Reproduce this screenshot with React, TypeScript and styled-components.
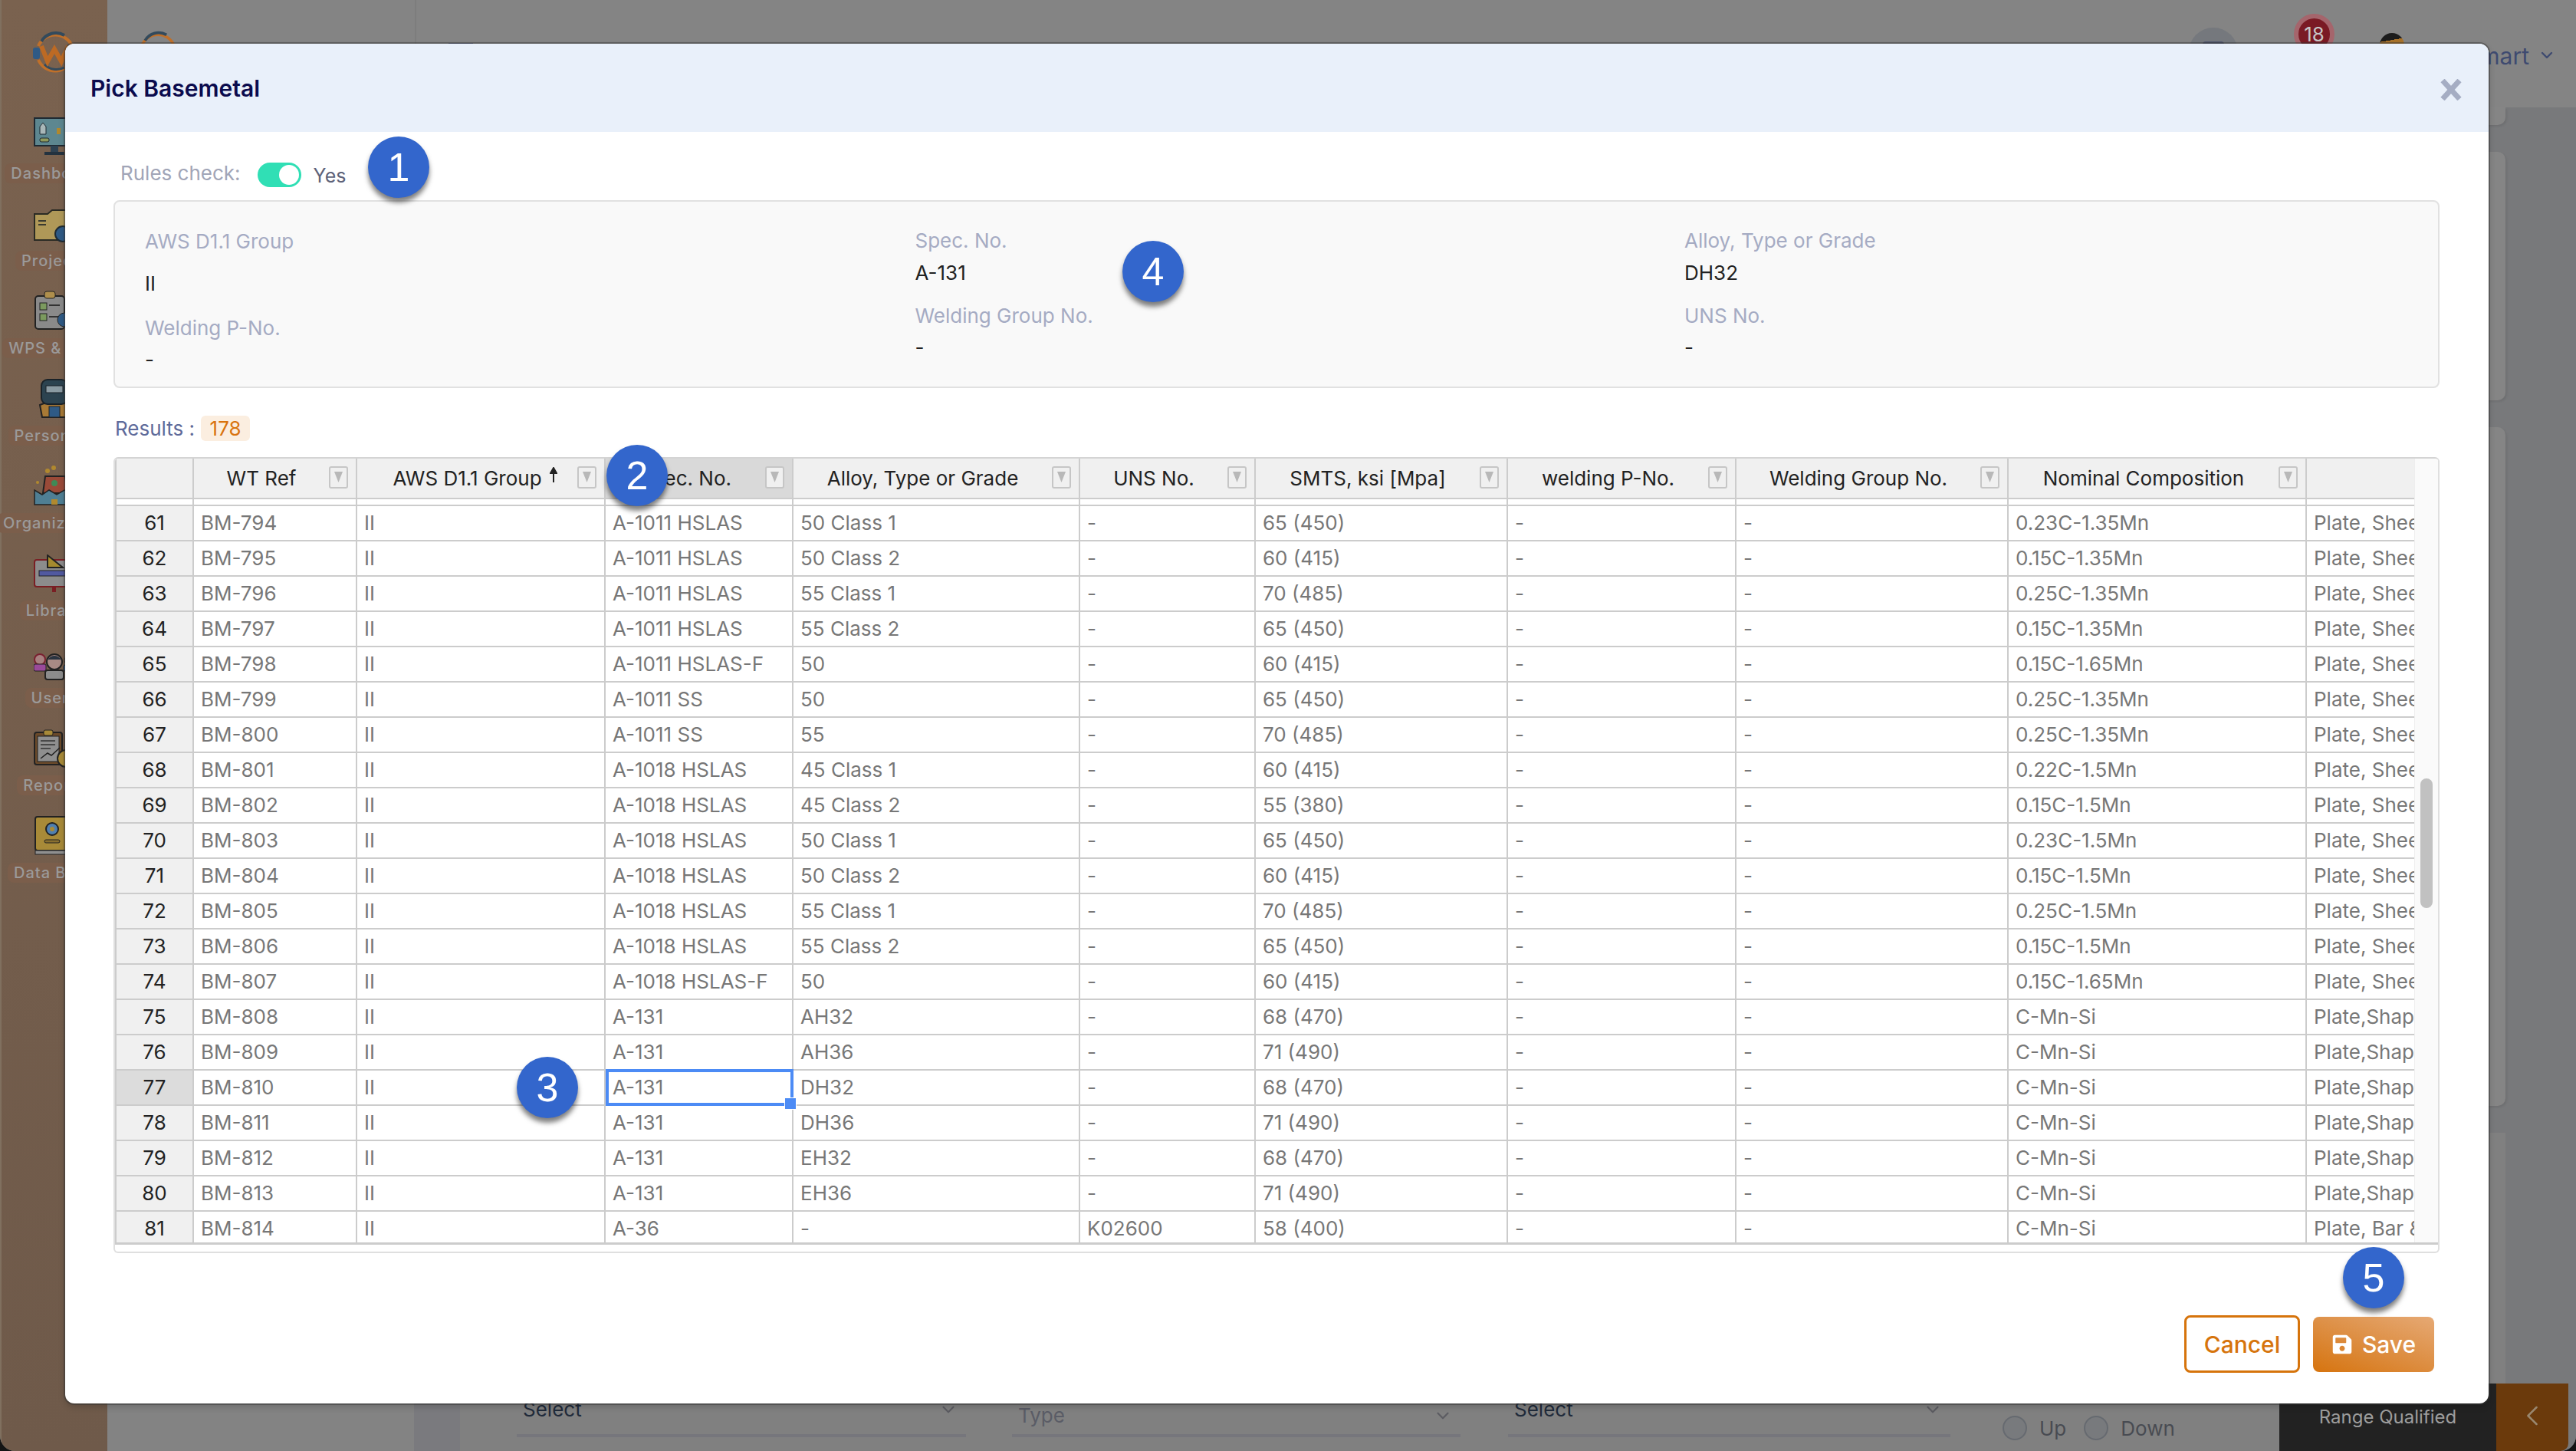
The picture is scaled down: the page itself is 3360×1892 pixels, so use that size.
import React from "react";
import styled, { createGlobalStyle } from "styled-components";
import { FaSave } from "react-icons/fa";
import { ChevronDown, ChevronLeft } from "lucide-react";

const Global = createGlobalStyle`
  html, body { margin: 0; padding: 0; background: #141414; }
  body { width: 3360px; height: 1892px; overflow: hidden; font-family: Inter, "Liberation Sans", sans-serif; }
  * { box-sizing: border-box; }
`;

const Page = styled.div`
  position: relative; width: 3360px; height: 1892px; display: flex; overflow: hidden;
  border-radius: 0 0 20px 20px; background: #78797b;
`;

/* ---------- sidebar ---------- */
const Sidebar = styled.aside`
  width: 140px; flex: none; display: flex; flex-direction: column; align-items: center;
  background: linear-gradient(180deg, #7a624f 0%, #6f5a4a 100%); border-left: 2px solid #80705f;
`;
const SideLogo = styled.div` height: 125px; width: 100%; padding: 38px 0 0 40px; `;
const SideItem = styled.div`
  height: 114px; width: 100%; display: flex; flex-direction: column; align-items: center;
  justify-content: flex-end; gap: 10px; flex: none;
`;
const SideLabel = styled.span`
  display: inline-block; white-space: nowrap; height: 26px; line-height: 26px; padding: 0 8px;
  border-radius: 8px; background: #7b5e4b; color: #9b9a9a; font-size: 20px; font-weight: 500; letter-spacing: 1px;
`;

const LogoMark = ({ size }: { size: number }) => (
  <svg width={size} height={size} viewBox="0 0 60 60">
    <path d="M8 22 A24 24 0 0 1 52 22" fill="none" stroke="#c0702a" strokeWidth="4" />
    <path d="M12 16 A22 22 0 0 1 42 8" fill="none" stroke="#334a5c" strokeWidth="4" />
    <path d="M8 40 A24 24 0 0 0 52 40" fill="none" stroke="#c0702a" strokeWidth="4" />
    <path d="M16 46 A22 22 0 0 0 42 50" fill="none" stroke="#334a5c" strokeWidth="3" />
    <path d="M12 22 L20 42 L29 26 L38 42 L47 22" fill="none" stroke="#bd6a24" strokeWidth="6" />
    <rect x="1" y="24" width="9" height="15" rx="3" fill="#2f5a85" />
  </svg>
);

const IconMonitor = () => (
  <svg width="54" height="50" viewBox="0 0 54 50">
    <rect x="1" y="1" width="52" height="36" fill="#5d8790" stroke="#1e2a33" strokeWidth="2" />
    <path d="M8 22 V12 L12 7 L16 12 V22 Z" fill="#a9b7b8" stroke="#1e2a33" />
    <rect x="30" y="14" width="5" height="8" fill="#b1892e" />
    <rect x="8" y="27" width="12" height="5" rx="2" fill="#8f9a5c" stroke="#1e2a33" />
    <rect x="22" y="37" width="10" height="8" fill="#2e4252" />
    <rect x="14" y="45" width="26" height="4" fill="#23323f" />
  </svg>
);
const IconFolder = () => (
  <svg width="54" height="44" viewBox="0 0 54 44">
    <path d="M1 6 H18 L24 1 H50 V40 H1 Z" fill="#af9858" stroke="#2b2b24" strokeWidth="2" />
    <rect x="6" y="14" width="10" height="2" fill="#3a3a30" /><rect x="6" y="19" width="10" height="2" fill="#3a3a30" />
    <circle cx="38" cy="32" r="10" fill="#2f5a85" stroke="#1e2a33" strokeWidth="2" />
  </svg>
);
const IconClip = () => (
  <svg width="54" height="52" viewBox="0 0 54 52">
    <rect x="2" y="7" width="38" height="43" rx="4" fill="#8a8a8a" stroke="#222" strokeWidth="2" />
    <rect x="14" y="1" width="14" height="9" rx="3" fill="#af8f4c" stroke="#222" />
    <rect x="8" y="16" width="9" height="9" fill="#7b9a5e" stroke="#222" /><rect x="8" y="30" width="9" height="9" fill="#7b9a5e" stroke="#222" />
    <rect x="20" y="18" width="14" height="2" fill="#333" /><rect x="20" y="33" width="14" height="2" fill="#333" />
    <circle cx="40" cy="38" r="9" fill="#2f5a85" stroke="#222" />
  </svg>
);
const IconWelder = () => (
  <svg width="54" height="51" viewBox="0 0 54 51">
    <path d="M8 34 L11 50 H43 L46 34 Q27 26 8 34 Z" fill="#a87a36" stroke="#222" strokeWidth="2" />
    <rect x="20" y="36" width="14" height="14" fill="#2f5a85" stroke="#222" />
    <rect x="10" y="1" width="34" height="32" rx="8" fill="#2c4350" stroke="#1a2228" strokeWidth="2" />
    <rect x="16" y="9" width="22" height="9" fill="#8a9aa2" stroke="#1a2228" />
  </svg>
);
const IconFactory = () => (
  <svg width="54" height="52" viewBox="0 0 54 52">
    <circle cx="26" cy="3" r="3" fill="#b1892e" /><circle cx="18" cy="7" r="3" fill="#b1892e" /><circle cx="5" cy="22" r="2" fill="#b1892e" />
    <path d="M15 14 H41 L44 36 H12 Z" fill="#9a4a38" stroke="#222" strokeWidth="2" />
    <circle cx="27" cy="23" r="4" fill="#3f8a56" />
    <path d="M1 51 V32 L11 38 L20 32 L30 38 L40 32 L53 38 V51 Z" fill="#4f7f94" stroke="#222" strokeWidth="1.5" />
    <rect x="23" y="44" width="8" height="7" fill="#b1892e" />
  </svg>
);
const IconBook = () => (
  <svg width="54" height="50" viewBox="0 0 54 50">
    <rect x="1" y="7" width="52" height="35" rx="3" fill="#8c8c8c" stroke="#7a1f24" strokeWidth="2" />
    <path d="M18 1 L38 17 H18 Z" fill="#a58a2e" stroke="#222" strokeWidth="2" />
    <rect x="7" y="21" width="42" height="7" fill="#5159a0" stroke="#222" />
    <rect x="24" y="42" width="5" height="7" fill="#7a1f24" />
  </svg>
);
const IconUsers = () => (
  <svg width="54" height="37" viewBox="0 0 54 37">
    <circle cx="8" cy="10" r="7" fill="#a88080" stroke="#7a2030" strokeWidth="2" />
    <rect x="0" y="16" width="16" height="9" rx="2" fill="#9a4a9a" stroke="#222" />
    <circle cx="27" cy="13" r="10" fill="#a88a84" stroke="#222" strokeWidth="2" />
    <path d="M18 10 Q27 0 36 10 Z" fill="#2a3440" />
    <rect x="15" y="24" width="24" height="12" rx="3" fill="#8c8c8c" stroke="#222" strokeWidth="2" />
    <circle cx="46" cy="11" r="6" fill="#a88a84" stroke="#222" />
    <rect x="39" y="17" width="14" height="8" rx="2" fill="#3a6aa0" stroke="#222" />
  </svg>
);
const IconReport = () => (
  <svg width="54" height="50" viewBox="0 0 54 50">
    <rect x="1" y="4" width="36" height="42" rx="3" fill="#6b4a2a" stroke="#222" strokeWidth="2" />
    <rect x="5" y="9" width="28" height="33" fill="#8f8f8f" stroke="#222" />
    <rect x="13" y="1" width="12" height="7" rx="2" fill="#a88a38" stroke="#222" />
    <path d="M9 15 H28 M9 20 H28 M9 25 H22" stroke="#333" strokeWidth="1.5" />
    <path d="M9 38 L18 31 L23 34 L34 24" stroke="#222" strokeWidth="1.5" fill="none" />
    <circle cx="42" cy="38" r="11" fill="#a88a38" stroke="#222" strokeWidth="2" />
  </svg>
);
const IconData = () => (
  <svg width="54" height="51" viewBox="0 0 54 51">
    <rect x="2" y="1" width="44" height="44" rx="3" fill="#a88a38" stroke="#222" strokeWidth="2" />
    <circle cx="24" cy="17" r="8" fill="#4f7fb0" stroke="#222" strokeWidth="2" />
    <circle cx="24" cy="17" r="3" fill="#a88a38" />
    <rect x="14" y="31" width="20" height="4" rx="2" fill="#8a7030" stroke="#222" />
    <rect x="2" y="45" width="46" height="5" fill="#8f8f8f" stroke="#222" />
  </svg>
);

const sideItems: { label: string; icon: React.ReactNode }[] = [
  { label: "Dashboard", icon: <IconMonitor /> },
  { label: "Projects", icon: <IconFolder /> },
  { label: "WPS & PQR", icon: <IconClip /> },
  { label: "Personnel", icon: <IconWelder /> },
  { label: "Organization", icon: <IconFactory /> },
  { label: "Library", icon: <IconBook /> },
  { label: "Users", icon: <IconUsers /> },
  { label: "Reports", icon: <IconReport /> },
  { label: "Data Bank", icon: <IconData /> },
];

/* ---------- page behind the dialog ---------- */
const Main = styled.div` flex: 1; min-width: 0; display: flex; flex-direction: column; `;
const TopBar = styled.header`
  height: 140px; flex: none; display: flex; align-items: flex-start; background: #848484; padding-left: 38px;
`;
const TopLogo = styled.div` margin-top: 38px; flex: none; `;
const TopBrand = styled.div`
  margin: 48px 0 0 -17px; width: 324px; flex: none; color: #33363c; font-size: 40px; font-weight: 700; letter-spacing: 1px;
`;
const TopDivider = styled.div` width: 2px; height: 140px; background: #7d7d7d; margin-left: 0; flex: none; `;
const Burger = styled.div` margin: 56px 0 0 42px; width: 32px; height: 6px; background: #4e5470; flex: none; `;
const TopRight = styled.div` margin-left: auto; display: flex; align-items: flex-start; padding-right: 26px; `;
const RoundBtn = styled.div`
  margin-top: 36px; width: 64px; height: 64px; border-radius: 50%; background: #75787d; display: flex; justify-content: center; padding-top: 18px;
`;
const RoundGlyph = styled.span` width: 28px; height: 20px; border-radius: 4px; background: #50566e; `;
const Badge = styled.div`
  margin: 18px 0 0 73px; width: 53px; height: 53px; border-radius: 50%; background: #7a1a24; border: 6px solid #a5656c;
  color: #c6c6c6; font-size: 26px; display: flex; align-items: center; justify-content: center;
`;
const Avatar = styled.div`
  margin: 43px 0 0 59px; width: 32px; height: 44px; border-radius: 16px 16px 4px 4px;
  background: linear-gradient(170deg, #1c1c1c 0 24%, #a8722a 24%);
`;
const UserName = styled.span` margin: 51px 0 0 12px; width: 151px; text-align: right; color: #3e4a70; font-size: 30px; line-height: 44px; white-space: nowrap; `;
const UserChevron = styled(ChevronDown)` margin: 60px 0 0 11px; color: #3e4a70; `;

const Below = styled.div` flex: 1; display: flex; min-height: 0; `;
const LeftRail = styled.div` width: 400px; flex: none; background: #838383; `;
const Strip = styled.div` width: 60px; flex: none; background: #7a7a7e; `;
const Content = styled.div`
  flex: 1; display: flex; flex-direction: column; gap: 35px; padding-right: 92px; min-width: 0; background: #78797b;
`;
const SoftCard = styled.div<{ $h?: number }>`
  background: #858585; border-radius: 0 0 10px 0; flex: ${p => (p.$h ? `0 0 ${p.$h}px` : "1")};
  ${p => (p.$h === 324 || p.$h === 885 ? "border-radius: 10px;" : "")}
  box-shadow: 2px 2px 3px rgba(0, 0, 0, .08);
`;
const FormCard = styled.div`
  flex: 1; display: flex; align-items: flex-end; padding: 0 0 18px 74px; background: #808080;
`;
const Field = styled.div<{ $w: number; $gap: number; $offset: number }>`
  width: ${p => p.$w}px; margin-right: ${p => p.$gap}px; flex: none; height: 51px; position: relative; display: flex;
  justify-content: space-between; border-bottom: 4px solid #76767c; padding: ${p => p.$offset}px 10px 0 8px;
  font-size: 26px; line-height: 30px;
`;
const FieldText = styled.span<{ $muted?: boolean }>` color: ${p => (p.$muted ? "#5a5c66" : "#1f2a3a")}; `;
const FieldChevron = styled(ChevronDown)` color: #5c5c62; margin-top: 2px; `;
const RadioGroup = styled.div` display: flex; align-items: center; gap: 16px; margin: 0 0 -4px 68px; color: #484b52; font-size: 26px; `;
const Radio = styled.span` width: 32px; height: 32px; border-radius: 50%; border: 2px solid #666a70; background: #787a7d; `;
const RadioLabel = styled.span` margin-right: 7px; `;
const RangeBar = styled.div`
  position: absolute; left: 2973px; top: 1804px; height: 88px; display: flex; border-radius: 0;
`;
const RangeText = styled.div`
  width: 283px; background: #222; color: #9d9d9d; font-size: 24px; text-align: center; padding-top: 29px;
`;
const RangeToggle = styled.div`
  width: 94px; background: #6b3a0c; color: #99876f; display: flex; align-items: flex-start; justify-content: center; padding-top: 20px;
  border-radius: 0 0 10px 0;
`;

/* ---------- dialog ---------- */
const Modal = styled.section`
  position: absolute; left: 85px; top: 57px; width: 3161px; height: 1773px; background: #fff; border-radius: 12px;
  display: flex; flex-direction: column; box-shadow: 0 0 0 2px rgba(50, 50, 50, .45), 0 4px 10px rgba(0, 0, 0, .2);
`;
const ModalHead = styled.header`
  height: 115px; flex: none; background: #e9f0fa; border-radius: 12px 12px 0 0; display: flex; align-items: center;
  justify-content: space-between; padding: 0 35px 0 33px;
`;
const ModalTitle = styled.h2` margin: 0; color: #0b0b4d; font-size: 30px; font-weight: 600; `;
const CloseBtn = styled.button` border: 0; padding: 0; background: none; width: 28px; height: 28px; display: flex; margin-top: 5px; `;
const ModalBody = styled.div` flex: 1; display: flex; flex-direction: column; padding: 40px 64px 0 63px; min-height: 0; `;

const RulesRow = styled.div` height: 32px; display: flex; align-items: center; padding-left: 9px; flex: none; `;
const RulesLabel = styled.span` color: #a1a5b7; font-size: 26px; margin: -6px 22px 0 0; `;
const Toggle = styled.span`
  width: 57px; height: 32px; border-radius: 16px; background: #30dfb5; display: flex; justify-content: flex-end; align-items: center; padding-right: 3px; margin-right: 16px;
`;
const Knob = styled.span` width: 26px; height: 26px; border-radius: 50%; background: #fff; `;
const YesText = styled.span` color: #5e6278; font-size: 25px; margin-top: 1px; `;

const InfoPanel = styled.div`
  margin-top: 17px; height: 245px; flex: none; background: #f9f9f9; border: 2px solid #e1e1e1; border-radius: 8px;
  display: grid; grid-template-columns: 1004.5px 1003.5px 1003.5px; padding-left: 39px;
`;
const InfoCol = styled.div<{ $top: number }>` padding-top: ${p => p.$top}px; display: flex; flex-direction: column; `;
const InfoLabel = styled.div<{ $mt?: number }>`
  color: #a5abc3; font-size: 26px; line-height: 36px; margin-top: ${p => p.$mt ?? 0}px;
`;
const InfoValue = styled.div<{ $mt: number }>`
  color: #222; font-size: 26px; line-height: 36px; margin-top: ${p => p.$mt}px;
`;

const ResultsRow = styled.div` margin-top: 36px; height: 33px; flex: none; display: flex; align-items: center; padding-left: 2px; `;
const ResultsLabel = styled.span` color: #5e6a9a; font-size: 26px; margin-right: 8px; `;
const ResultsBadge = styled.span`
  width: 64px; height: 33px; border-radius: 6px; background: #fbeee0; color: #d9730d; font-size: 26px; display: flex; align-items: center; justify-content: center;
`;

const TableFrame = styled.div`
  margin-top: 21px; height: 1038px; flex: none; background: #fff; border: 2px solid #dfdfdf; border-top-color: #d4d4d4; border-radius: 6px;
  display: flex; flex-direction: column; overflow: hidden;
`;
const TableRowWrap = styled.div` height: 1025px; flex: none; display: flex; border-bottom: 3px solid #ccc; `;
const TableClip = styled.div` width: 2999px; flex: none; overflow: hidden; border-left: 2px solid #ccc; `;
const COLS = "101px 213px 324px 245px 374px 229px 329px 298px 355px 389px 400px";
const HeadRow = styled.div`
  display: grid; grid-template-columns: ${COLS}; height: 53px; border-bottom: 2px solid #ccc; background: #f0f0f0; width: 3057px;
`;
const HeadCell = styled.div<{ $active?: boolean }>`
  display: flex; align-items: center; padding: 0 10px 0 0; border-right: 2px solid #ccc; min-width: 0;
  background: ${p => (p.$active ? "#d9d9d9" : "#f0f0f0")};
`;
const HeadTextWrap = styled.div` flex: 1; display: flex; justify-content: center; min-width: 0; `;
const HeadText = styled.span`
  position: relative; color: #222; font-size: 26px; white-space: nowrap; line-height: 30px;
`;
const SortArrow = styled.svg` position: absolute; left: calc(100% + 10px); top: 0; `;
const FilterBtn = styled.span`
  width: 25px; height: 29px; flex: none; border: 2px solid #c6c6c6; border-radius: 3px; background: #f0f0f0; display: flex; align-items: flex-start; justify-content: center; padding-top: 5px; margin-top: -2px;
`;
const GapRow = styled.div`
  display: grid; grid-template-columns: ${COLS}; height: 9px; border-bottom: 2px solid #ccc; width: 3057px;
`;
const GapCell = styled.div` border-right: 2px solid #ccc; `;
const BodyClip = styled.div` height: 963px; overflow: hidden; margin-top: 0; `;
const DataRow = styled.div` display: grid; grid-template-columns: ${COLS}; height: 46px; width: 3057px; `;
const RowHead = styled.div<{ $active?: boolean }>`
  background: ${p => (p.$active ? "#dcdcdc" : "#f0f0f0")}; color: #222; font-size: 26px; text-align: center; line-height: 44px;
  border-right: 2px solid #ccc; border-bottom: 2px solid #ccc;
`;
const Cell = styled.div<{ $selected?: boolean }>`
  position: relative; color: #777; font-size: 26px; line-height: 44px; padding-left: 9px; white-space: nowrap; overflow: ${p => (p.$selected ? "visible" : "hidden")};
  border-right: 2px solid #ccc; border-bottom: 2px solid #ccc;
  ${p => p.$selected && `
    z-index: 2;
    &::before { content: ""; position: absolute; left: 0; top: -2px; right: -2px; bottom: -2px; border: 4px solid #4c8bf5; pointer-events: none; }
    &::after { content: ""; position: absolute; right: -6px; bottom: -7px; width: 14px; height: 14px; background: #4c8bf5; border: 1px solid #fff; }
  `}
`;
const ScrollTrack = styled.div` flex: 1; background: #fafafa; border-left: 1px solid #eee; padding: 417px 0 0 7px; `;
const ScrollThumb = styled.div` width: 16px; height: 169px; border-radius: 8px; background: #c1c1c1; `;

const ModalFoot = styled.footer` flex: 1; display: flex; justify-content: flex-end; align-items: flex-start; gap: 17px; padding: 81px 7px 0 0; `;
const CancelBtn = styled.button`
  width: 151px; height: 75px; margin-top: 0; border: 3px solid #d6740c; border-radius: 8px; background: #fff; color: #d6740c;
  font: 500 30px Inter, "Liberation Sans", sans-serif; padding: 0;
`;
const SaveBtn = styled.button`
  width: 158px; height: 72px; margin-top: 2px; border: 0; border-radius: 8px; color: #fff; display: flex; align-items: center; justify-content: center; gap: 12px; padding: 0;
  background: linear-gradient(20deg, #d6740f 0%, #de9148 55%, #e6a974 100%);
  font: 500 30px Inter, "Liberation Sans", sans-serif;
`;

const Callout = styled.span<{ $x: number; $y: number }>`
  position: absolute; left: ${p => p.$x}px; top: ${p => p.$y}px; width: 80px; height: 80px; border-radius: 50%;
  background: #3366cc; color: #fff; font: 52px/80px "Liberation Sans", Arial, sans-serif; text-align: center; z-index: 5;
  box-shadow: 0 6px 6px rgba(0, 0, 0, .5);
`;

/* ---------- data ---------- */
type Row = [string, string, string, string, string, string, string];
const R1011 = "A-1011 HSLAS", R1018 = "A-1018 HSLAS", SHEET = "Plate, Sheet & Strip", SHAPE = "Plate,Shapes";
const rows: Row[] = [
  [R1011, "50 Class 1", "-", "65 (450)", "0.23C-1.35Mn", SHEET, ""],
  [R1011, "50 Class 2", "-", "60 (415)", "0.15C-1.35Mn", SHEET, ""],
  [R1011, "55 Class 1", "-", "70 (485)", "0.25C-1.35Mn", SHEET, ""],
  [R1011, "55 Class 2", "-", "65 (450)", "0.15C-1.35Mn", SHEET, ""],
  ["A-1011 HSLAS-F", "50", "-", "60 (415)", "0.15C-1.65Mn", SHEET, ""],
  ["A-1011 SS", "50", "-", "65 (450)", "0.25C-1.35Mn", SHEET, ""],
  ["A-1011 SS", "55", "-", "70 (485)", "0.25C-1.35Mn", SHEET, ""],
  [R1018, "45 Class 1", "-", "60 (415)", "0.22C-1.5Mn", SHEET, ""],
  [R1018, "45 Class 2", "-", "55 (380)", "0.15C-1.5Mn", SHEET, ""],
  [R1018, "50 Class 1", "-", "65 (450)", "0.23C-1.5Mn", SHEET, ""],
  [R1018, "50 Class 2", "-", "60 (415)", "0.15C-1.5Mn", SHEET, ""],
  [R1018, "55 Class 1", "-", "70 (485)", "0.25C-1.5Mn", SHEET, ""],
  [R1018, "55 Class 2", "-", "65 (450)", "0.15C-1.5Mn", SHEET, ""],
  ["A-1018 HSLAS-F", "50", "-", "60 (415)", "0.15C-1.65Mn", SHEET, ""],
  ["A-131", "AH32", "-", "68 (470)", "C-Mn-Si", SHAPE, ""],
  ["A-131", "AH36", "-", "71 (490)", "C-Mn-Si", SHAPE, ""],
  ["A-131", "DH32", "-", "68 (470)", "C-Mn-Si", SHAPE, ""],
  ["A-131", "DH36", "-", "71 (490)", "C-Mn-Si", SHAPE, ""],
  ["A-131", "EH32", "-", "68 (470)", "C-Mn-Si", SHAPE, ""],
  ["A-131", "EH36", "-", "71 (490)", "C-Mn-Si", SHAPE, ""],
  ["A-36", "-", "K02600", "58 (400)", "C-Mn-Si", "Plate, Bar & Shapes", ""],
];
const heads = ["WT Ref", "AWS D1.1 Group", "Spec. No.", "Alloy, Type or Grade", "UNS No.", "SMTS, ksi [Mpa]", "welding P-No.", "Welding Group No.", "Nominal Composition"];

const FilterGlyph = () => (
  <FilterBtn>
    <svg width="11" height="14" viewBox="0 0 11 14"><path d="M0 0 H11 L5.5 14 Z" fill="#b8b8b8" /></svg>
  </FilterBtn>
);

export default function App() {
  return (
    <>
      <Global />
      <Page>
        <Sidebar>
          <SideLogo><LogoMark size={60} /></SideLogo>
          {sideItems.map(i => (
            <SideItem key={i.label}>
              {i.icon}
              <SideLabel>{i.label}</SideLabel>
            </SideItem>
          ))}
        </Sidebar>
        <Main>
          <TopBar>
            <TopLogo><LogoMark size={56} /></TopLogo>
            <TopBrand>WELDBRACE</TopBrand>
            <TopDivider />
            <Burger />
            <TopRight>
              <RoundBtn><RoundGlyph /></RoundBtn>
              <Badge>18</Badge>
              <Avatar />
              <UserName>Smart</UserName>
              <UserChevron size={24} strokeWidth={2.4} />
            </TopRight>
          </TopBar>
          <Below>
            <LeftRail />
            <Strip />
            <Content>
              <SoftCard $h={23} />
              <SoftCard $h={324} />
              <SoftCard $h={885} />
              <FormCard>
                <Field $w={586} $gap={60} $offset={0}><FieldText>Select</FieldText><FieldChevron size={26} /></Field>
                <Field $w={585} $gap={62} $offset={8}><FieldText $muted>Type</FieldText><FieldChevron size={26} /></Field>
                <Field $w={577} $gap={0} $offset={0}><FieldText>Select</FieldText><FieldChevron size={26} /></Field>
                <RadioGroup>
                  <Radio /><RadioLabel>Up</RadioLabel>
                  <Radio /><RadioLabel>Down</RadioLabel>
                </RadioGroup>
              </FormCard>
            </Content>
          </Below>
        </Main>
        <RangeBar>
          <RangeText>Range Qualified</RangeText>
          <RangeToggle><ChevronLeft size={44} strokeWidth={1.4} /></RangeToggle>
        </RangeBar>

        <Modal>
          <ModalHead>
            <ModalTitle>Pick Basemetal</ModalTitle>
            <CloseBtn aria-label="Close">
              <svg width="28" height="28" viewBox="0 0 28 28"><path d="M3 2 L25 26 M25 2 L3 26" stroke="#a5adc3" strokeWidth="7" /></svg>
            </CloseBtn>
          </ModalHead>
          <ModalBody>
            <RulesRow>
              <RulesLabel>Rules check:</RulesLabel>
              <Toggle><Knob /></Toggle>
              <YesText>Yes</YesText>
            </RulesRow>
            <InfoPanel>
              <InfoCol $top={34}>
                <InfoLabel>AWS D1.1 Group</InfoLabel>
                <InfoValue $mt={19}>II</InfoValue>
                <InfoLabel $mt={22}>Welding P-No.</InfoLabel>
                <InfoValue $mt={5}>-</InfoValue>
              </InfoCol>
              <InfoCol $top={33}>
                <InfoLabel>Spec. No.</InfoLabel>
                <InfoValue $mt={6}>A-131</InfoValue>
                <InfoLabel $mt={20}>Welding Group No.</InfoLabel>
                <InfoValue $mt={5}>-</InfoValue>
              </InfoCol>
              <InfoCol $top={33}>
                <InfoLabel>Alloy, Type or Grade</InfoLabel>
                <InfoValue $mt={6}>DH32</InfoValue>
                <InfoLabel $mt={20}>UNS No.</InfoLabel>
                <InfoValue $mt={5}>-</InfoValue>
              </InfoCol>
            </InfoPanel>
            <ResultsRow>
              <ResultsLabel>Results :</ResultsLabel>
              <ResultsBadge>178</ResultsBadge>
            </ResultsRow>
            <TableFrame>
              <TableRowWrap>
                <TableClip>
                  <HeadRow>
                    <HeadCell />
                    {heads.map((h, i) => (
                      <HeadCell key={h} $active={i === 2}>
                        <HeadTextWrap>
                          <HeadText>
                            {h}
                            {i === 1 && (
                              <SortArrow width="10" height="20" viewBox="0 0 10 20">
                                <path d="M5 20 V3 M1 8 L5 1 L9 8 Z" stroke="#222" strokeWidth="2" fill="#222" />
                              </SortArrow>
                            )}
                          </HeadText>
                        </HeadTextWrap>
                        <FilterGlyph />
                      </HeadCell>
                    ))}
                    <HeadCell />
                  </HeadRow>
                  <GapRow>
                    {Array.from({ length: 11 }, (_, i) => <GapCell key={i} />)}
                  </GapRow>
                  <BodyClip>
                    {rows.map((r, idx) => {
                      const n = 61 + idx;
                      const sel = n === 77;
                      return (
                        <DataRow key={n}>
                          <RowHead $active={sel}>{n}</RowHead>
                          <Cell>{`BM-${794 + idx}`}</Cell>
                          <Cell>II</Cell>
                          <Cell $selected={sel}>{r[0]}</Cell>
                          <Cell>{r[1]}</Cell>
                          <Cell>{r[2]}</Cell>
                          <Cell>{r[3]}</Cell>
                          <Cell>-</Cell>
                          <Cell>-</Cell>
                          <Cell>{r[4]}</Cell>
                          <Cell>{r[5]}</Cell>
                        </DataRow>
                      );
                    })}
                  </BodyClip>
                </TableClip>
                <ScrollTrack><ScrollThumb /></ScrollTrack>
              </TableRowWrap>
            </TableFrame>
            <ModalFoot>
              <CancelBtn>Cancel</CancelBtn>
              <SaveBtn><FaSave size={28} />Save</SaveBtn>
            </ModalFoot>
          </ModalBody>
          <Callout $x={395} $y={121}>1</Callout>
          <Callout $x={706} $y={523}>2</Callout>
          <Callout $x={589} $y={1321}>3</Callout>
          <Callout $x={1379} $y={257}>4</Callout>
          <Callout $x={2971} $y={1569}>5</Callout>
        </Modal>
      </Page>
    </>
  );
}
